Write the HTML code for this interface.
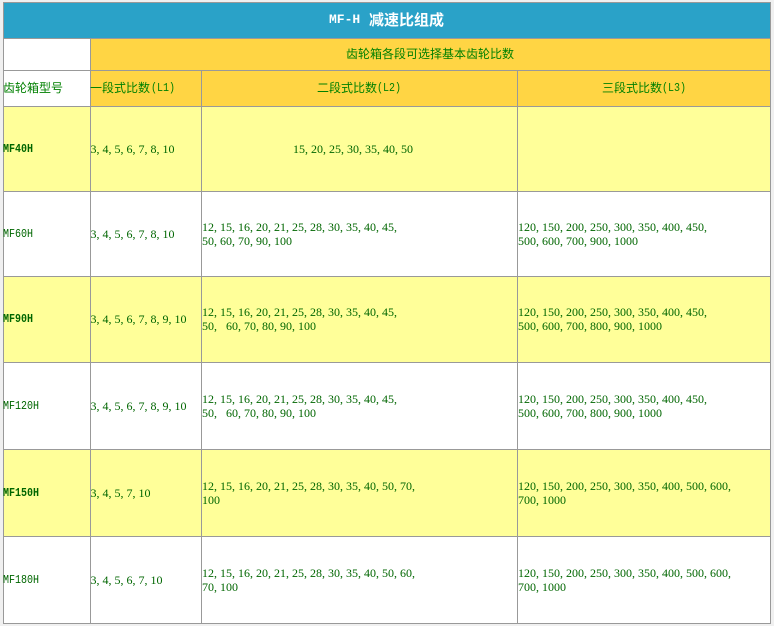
<!DOCTYPE html>
<html><head><meta charset="utf-8"><style>
html,body{margin:0;padding:0;background:#f0f0f0;width:774px;height:626px;overflow:hidden}
#p{position:absolute;left:0;top:0;width:774px;height:626px;overflow:hidden;font-family:"Liberation Serif","Noto Serif CJK SC",serif;font-size:12px;color:#006600}
.b{position:absolute}
.l{position:absolute;background:#999}
.t{position:absolute;white-space:nowrap;line-height:14px}
.c{font-family:"WenQuanYi Zen Hei","Noto Sans CJK SC",sans-serif;font-size:12px;color:#008000}
.m,.k{font-family:"Liberation Mono",monospace;font-size:12px;transform:scaleX(.833);transform-origin:0 0}
.k{font-weight:bold}
</style></head><body><div id="p">
<div class="b" style="left:3px;top:2px;width:768px;height:622px;background:#fff"></div>
<div class="b" style="left:3px;top:3px;width:767px;height:35px;background:#2aa2c8"></div>
<div class="b" style="left:91px;top:39px;width:679px;height:67px;background:#ffd544"></div>
<div class="b" style="left:3px;top:107px;width:767px;height:84px;background:#ffff99"></div>
<div class="b" style="left:3px;top:277px;width:767px;height:85px;background:#ffff99"></div>
<div class="b" style="left:3px;top:450px;width:767px;height:86px;background:#ffff99"></div>

<div class="l" style="left:3px;top:2px;width:768px;height:1px"></div>
<div class="l" style="left:3px;top:38px;width:768px;height:1px"></div>
<div class="l" style="left:3px;top:70px;width:768px;height:1px"></div>
<div class="l" style="left:3px;top:106px;width:768px;height:1px"></div>
<div class="l" style="left:3px;top:191px;width:768px;height:1px"></div>
<div class="l" style="left:3px;top:276px;width:768px;height:1px"></div>
<div class="l" style="left:3px;top:362px;width:768px;height:1px"></div>
<div class="l" style="left:3px;top:449px;width:768px;height:1px"></div>
<div class="l" style="left:3px;top:536px;width:768px;height:1px"></div>
<div class="l" style="left:3px;top:623px;width:768px;height:1px"></div>
<div class="l" style="left:3px;top:2px;width:1px;height:622px"></div>
<div class="l" style="left:770px;top:2px;width:1px;height:622px"></div>
<div class="l" style="left:90px;top:38px;width:1px;height:586px"></div>
<div class="l" style="left:201px;top:70px;width:1px;height:554px"></div>
<div class="l" style="left:517px;top:70px;width:1px;height:554px"></div>

<div class="t" style="left:329px;top:13px;color:#fff;font-family:'Liberation Mono',monospace;font-weight:bold;font-size:13px">MF-H</div>
<div class="t c" style="left:369px;top:13px;color:#fff;font-size:15px;font-weight:bold">减速比组成</div>
<div class="t c" style="left:346px;top:47px">齿轮箱各段可选择基本齿轮比数</div>
<div class="t c" style="left:3px;top:81px">齿轮箱型号</div>
<div class="t c" style="left:90px;top:81px">一段式比数</div><div class="t m" style="left:151px;top:81px;color:#008000">(L1)</div>
<div class="t c" style="left:317px;top:81px">二段式比数</div><div class="t m" style="left:377px;top:81px;color:#008000">(L2)</div>
<div class="t c" style="left:602px;top:81px">三段式比数</div><div class="t m" style="left:662px;top:81px;color:#008000">(L3)</div>

<div class="t k" style="left:3px;top:142px">MF40H</div>
<div class="t" style="left:90.5px;top:142px">3, 4, 5, 6, 7, 8, 10</div>
<div class="t" style="left:293px;top:142px">15, 20, 25, 30, 35, 40, 50</div>

<div class="t m" style="left:3px;top:227px">MF60H</div>
<div class="t" style="left:90.5px;top:227px">3, 4, 5, 6, 7, 8, 10</div>
<div class="t" style="left:202px;top:220px">12, 15, 16, 20, 21, 25, 28, 30, 35, 40, 45,<br>50, 60, 70, 90, 100</div>
<div class="t" style="left:518px;top:220px">120, 150, 200, 250, 300, 350, 400, 450,<br>500, 600, 700, 900, 1000</div>

<div class="t k" style="left:3px;top:312px">MF90H</div>
<div class="t" style="left:90.5px;top:312px">3, 4, 5, 6, 7, 8, 9, 10</div>
<div class="t" style="left:202px;top:305px;white-space:pre">12, 15, 16, 20, 21, 25, 28, 30, 35, 40, 45,
50,   60, 70, 80, 90, 100</div>
<div class="t" style="left:518px;top:305px">120, 150, 200, 250, 300, 350, 400, 450,<br>500, 600, 700, 800, 900, 1000</div>

<div class="t m" style="left:3px;top:399px">MF120H</div>
<div class="t" style="left:90.5px;top:399px">3, 4, 5, 6, 7, 8, 9, 10</div>
<div class="t" style="left:202px;top:392px;white-space:pre">12, 15, 16, 20, 21, 25, 28, 30, 35, 40, 45,
50,   60, 70, 80, 90, 100</div>
<div class="t" style="left:518px;top:392px">120, 150, 200, 250, 300, 350, 400, 450,<br>500, 600, 700, 800, 900, 1000</div>

<div class="t k" style="left:3px;top:486px">MF150H</div>
<div class="t" style="left:90.5px;top:486px">3, 4, 5, 7, 10</div>
<div class="t" style="left:202px;top:479px">12, 15, 16, 20, 21, 25, 28, 30, 35, 40, 50, 70,<br>100</div>
<div class="t" style="left:518px;top:479px">120, 150, 200, 250, 300, 350, 400, 500, 600,<br>700, 1000</div>

<div class="t m" style="left:3px;top:573px">MF180H</div>
<div class="t" style="left:90.5px;top:573px">3, 4, 5, 6, 7, 10</div>
<div class="t" style="left:202px;top:566px">12, 15, 16, 20, 21, 25, 28, 30, 35, 40, 50, 60,<br>70, 100</div>
<div class="t" style="left:518px;top:566px">120, 150, 200, 250, 300, 350, 400, 500, 600,<br>700, 1000</div>
</div></body></html>
